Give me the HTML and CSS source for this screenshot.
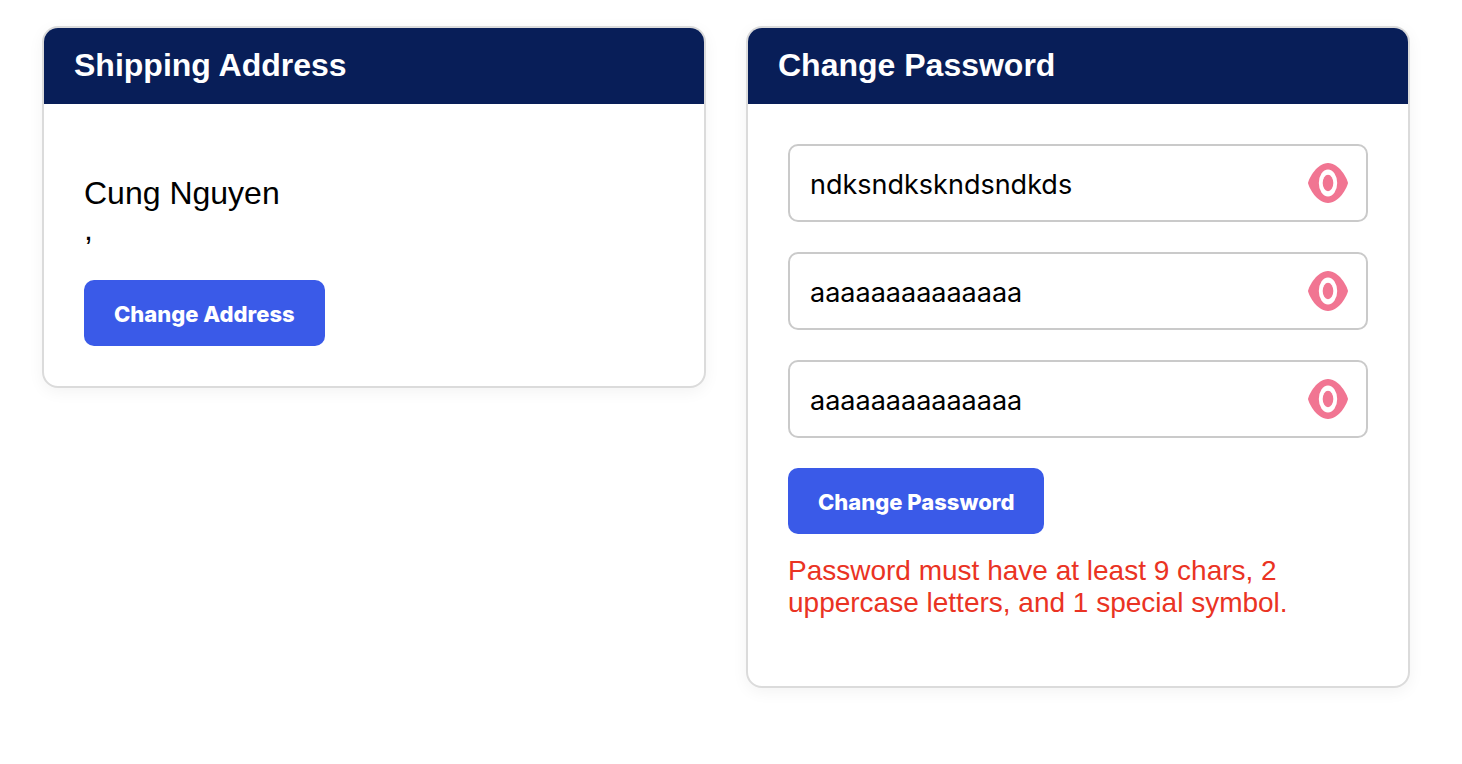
FILE: index.html
```html
<!DOCTYPE html>
<html lang="en">
<head>
<meta charset="utf-8">
<title>Account settings</title>
<link rel="stylesheet" href="styles.css">
</head>
<body>
<svg class="sprite" aria-hidden="true">
  <symbol id="eye" viewBox="0 0 40 40">
    <path class="eye-shape" d="M0 20C1 15 9 0 20 0S39 15 40 20C39 25 31 40 20 40S1 25 0 20Z"/>
    <ellipse class="eye-white" cx="20" cy="20" rx="9.200" ry="13.500"/>
    <ellipse class="eye-shape" cx="20" cy="20" rx="5.300" ry="8.200"/>
  </symbol>
</svg>
<main class="cards">
  <section class="card">
    <h2 class="card-title">Shipping Address</h2>
    <div class="card-body">
      <p class="address">Cung Nguyen<br>,</p>
      <button class="button" type="button">Change Address</button>
    </div>
  </section>
  <section class="card">
    <h2 class="card-title">Change Password</h2>
    <form class="card-body">
      <div class="field">
        <input class="field-input" type="text" aria-label="Current password" value="ndksndkskndsndkds">
        <button class="toggle" type="button" aria-label="Hide current password"><svg class="eye"><use href="#eye"/></svg></button>
      </div>
      <div class="field">
        <input class="field-input" type="text" aria-label="New password" value="aaaaaaaaaaaaaa">
        <button class="toggle" type="button" aria-label="Hide new password"><svg class="eye"><use href="#eye"/></svg></button>
      </div>
      <div class="field">
        <input class="field-input" type="text" aria-label="Confirm password" value="aaaaaaaaaaaaaa">
        <button class="toggle" type="button" aria-label="Hide confirmed password"><svg class="eye"><use href="#eye"/></svg></button>
      </div>
      <button class="button" type="button">Change Password</button>
      <p class="error" role="alert">Password must have at least 9 chars, 2 uppercase letters, and 1 special symbol.</p>
    </form>
  </section>
</main>
</body>
</html>
```
FILE: styles.css
```css
* {
  box-sizing: border-box;
}

body {
  margin: 0;
  background: #fff;
  color: #000;
  font-family: "Liberation Sans", Arial, sans-serif;
}

.sprite {
  display: none;
}

.cards {
  display: flex;
  align-items: flex-start;
  gap: 40px;
  padding: 26px 52px 26px 42px;
}

.card {
  flex: 1;
  min-width: 0;
  overflow: hidden;
  border: 2px solid #dbdbdb;
  border-radius: 16px;
  background: #fff;
  box-shadow: 0 4px 16px rgba(0, 0, 0, 0.05);
}

.card-title {
  margin: 0;
  padding: 19px 30px 21px;
  background: #081e58;
  color: #fff;
  font-size: 32px;
  line-height: 36px;
}

.card-body {
  display: flex;
  flex-direction: column;
  align-items: flex-start;
  padding: 40px;
}

.address {
  margin: 31px 0 33px;
  font-size: 32px;
  line-height: 36px;
}

.button {
  height: 66px;
  padding: 2px 30px 0;
  border: 0;
  border-radius: 10px;
  background: #3a5ae8;
  color: #fff;
  font-family: Inter, sans-serif;
  font-size: 22px;
  font-weight: 800;
}

.field {
  position: relative;
  width: 100%;
  margin-bottom: 30px;
}

.field-input {
  display: block;
  width: 100%;
  height: 78px;
  padding: 2px 70px 0 20px;
  border: 2px solid #cacaca;
  border-radius: 10px;
  background: #fff;
  color: #000;
  font-family: Inter, sans-serif;
  font-size: 27px;
}

.toggle {
  position: absolute;
  top: 19px;
  right: 20px;
  padding: 0;
  border: 0;
  background: none;
}

.eye {
  display: block;
  width: 40px;
  height: 40px;
}

.eye-shape {
  fill: #f17592;
}

.eye-white {
  fill: #fff;
}

.error {
  margin: 21px 0 27px;
  color: #ea3323;
  font-size: 28px;
  line-height: 32px;
}
```
